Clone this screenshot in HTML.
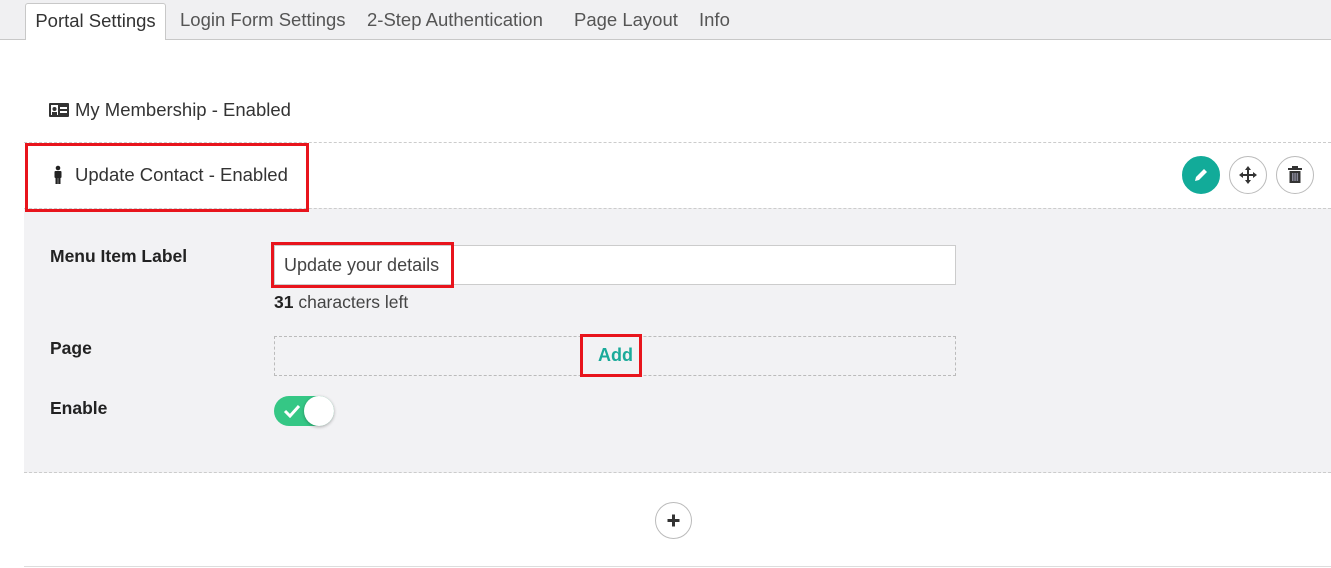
<!DOCTYPE html>
<html><head><style>
*{box-sizing:border-box;margin:0;padding:0}
body{width:1331px;height:568px;background:#fff;font-family:"Liberation Sans",sans-serif;color:#333;position:relative;overflow:hidden}
.a{position:absolute}
.tabs{left:0;top:0;width:1331px;height:40px;background:#f0f0f2;border-bottom:1px solid #c8c8c8}
.tab{top:0;height:40px;font-size:18.5px;color:#555;line-height:40px}
.act{left:25px;top:3px;width:141px;height:37px;background:#fff;border:1px solid #c8c8c8;border-bottom:none;border-radius:3px 3px 0 0;color:#333;text-align:center;line-height:34px;font-size:18.5px}
.lbl{font-size:17.5px;font-weight:bold;color:#222}
.circ{width:38px;height:38px;border-radius:50%;border:1px solid #bbb;background:#fff}
.red{z-index:5}
</style></head><body>
<div class="a tabs"></div>
<div class="a act">Portal Settings</div>
<div class="a tab" style="left:180px">Login Form Settings</div>
<div class="a tab" style="left:367px">2-Step Authentication</div>
<div class="a tab" style="left:574px">Page Layout</div>
<div class="a tab" style="left:699px">Info</div>

<svg class="a" style="left:49px;top:103px" width="20" height="14"><rect width="20" height="14" rx="1" fill="#333"/><rect x="2" y="2" width="7" height="10" fill="#fff"/><circle cx="5.5" cy="6" r="2" fill="#333"/><rect x="3" y="9" width="5" height="3" fill="#333"/><rect x="11" y="4" width="7" height="2" fill="#fff"/><rect x="11" y="8" width="7" height="2" fill="#fff"/></svg>
<div class="a" style="left:75px;top:99px;font-size:18.5px">My Membership - Enabled</div>
<div class="a" style="left:24px;top:142px;width:1307px;border-top:1px dashed #ccc"></div>

<svg class="a" style="left:54px;top:165px" width="8" height="19"><circle cx="4" cy="3" r="2.3" fill="#222"/><rect x="0.5" y="6" width="7" height="7" rx="1" fill="#222"/><rect x="1.5" y="12" width="2.3" height="7" fill="#222"/><rect x="4.2" y="12" width="2.3" height="7" fill="#222"/></svg>
<div class="a" style="left:75px;top:164px;font-size:18.5px">Update Contact - Enabled</div>
<div class="a red" style="left:25px;top:143px;width:284px;height:69px;border:3px solid #e8141c"></div>

<div class="a circ" style="left:1182px;top:156px;background:#12ab99;border-color:#12ab99"></div>
<svg class="a" style="left:1192px;top:166px" width="18" height="18"><path d="M3 15 L4 11 L12 3 L15 6 L7 14 Z" fill="#fff"/></svg>
<div class="a circ" style="left:1229px;top:156px"></div>
<svg class="a" style="left:1238px;top:165px" width="20" height="20"><path d="M10 3V17M3 10H17" stroke="#333" stroke-width="2"/><path d="M10 1L7 5H13ZM10 19L7 15H13ZM1 10L5 7V13ZM19 10L15 7V13Z" fill="#333"/></svg>
<div class="a circ" style="left:1276px;top:156px"></div>
<svg class="a" style="left:1287px;top:165px" width="16" height="19"><rect x="1" y="3" width="14" height="2" fill="#333"/><rect x="5" y="1" width="6" height="2" fill="#333"/><rect x="2.5" y="6" width="11" height="12" fill="#333"/><rect x="5" y="8" width="1.5" height="8" fill="#889"/><rect x="7.3" y="8" width="1.5" height="8" fill="#889"/><rect x="9.6" y="8" width="1.5" height="8" fill="#889"/></svg>

<div class="a" style="left:24px;top:208px;width:1307px;height:265px;background:#f2f2f4;border-top:1px dashed #ccc;border-bottom:1px dashed #ccc"></div>
<div class="a lbl" style="left:50px;top:246px">Menu Item Label</div>
<div class="a" style="left:274px;top:245px;width:682px;height:40px;background:#fff;border:1px solid #ccc"></div>
<div class="a" style="left:284px;top:255px;font-size:18px;color:#444">Update your details</div>
<div class="a red" style="left:271px;top:242px;width:183px;height:46px;border:3px solid #e8141c"></div>
<div class="a" style="left:274px;top:292px;font-size:17.5px;color:#444"><b style="color:#222">31</b> characters left</div>

<div class="a lbl" style="left:50px;top:338px">Page</div>
<div class="a" style="left:274px;top:336px;width:682px;height:40px;border:1px dashed #bbb"></div>
<div class="a" style="left:598px;top:345px;font-size:18px;font-weight:bold;color:#1aaa9a">Add</div>
<div class="a red" style="left:580px;top:334px;width:62px;height:43px;border:3px solid #e8141c"></div>

<div class="a lbl" style="left:50px;top:398px">Enable</div>
<div class="a" style="left:274px;top:396px;width:60px;height:30px;border-radius:15px;background:#35c785"></div>
<svg class="a" style="left:283px;top:404px" width="18" height="14"><path d="M2 7L7 12L16 2" stroke="#fff" stroke-width="3" fill="none"/></svg>
<div class="a" style="left:304px;top:396px;width:30px;height:30px;border-radius:50%;background:#fff;box-shadow:0 1px 3px rgba(0,0,0,.3)"></div>

<div class="a circ" style="left:655px;top:502px;width:37px;height:37px"></div>
<svg class="a" style="left:666px;top:513px" width="15" height="15"><path d="M7.5 1.5V13.5M1.5 7.5H13.5" stroke="#333" stroke-width="3"/></svg>
<div class="a" style="left:24px;top:566px;width:1307px;border-top:1px solid #ddd"></div>
</body></html>
